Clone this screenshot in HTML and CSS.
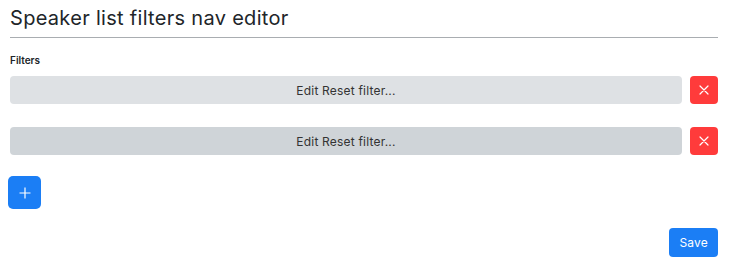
FILE: index.html
```html
<!DOCTYPE html>
<html lang="en">
<head>
    <meta charset="UTF-8">
    <meta name="viewport" content="width=device-width, initial-scale=1">
    <title>Speaker list filters nav editor</title>
    <link rel="stylesheet" href="styles.css">
</head>
<body>
    <main class="editor">
        <h1 class="editor-title">Speaker list filters nav editor</h1>

        <label class="field-label">Filters</label>
        <div class="filter-list">
            <div class="filter-row">
                <button class="filter-edit">Edit Reset filter...</button>
                <button class="btn-remove" title="Remove">
                    <svg width="10" height="10" viewBox="0 0 10 10"><path d="M1 1L9 9M9 1L1 9" stroke="#fff" stroke-width="1.2" stroke-linecap="round"/></svg>
                </button>
            </div>
            <div class="filter-row">
                <button class="filter-edit filter-edit-dark">Edit Reset filter...</button>
                <button class="btn-remove" title="Remove">
                    <svg width="10" height="10" viewBox="0 0 10 10"><path d="M1 1L9 9M9 1L1 9" stroke="#fff" stroke-width="1.2" stroke-linecap="round"/></svg>
                </button>
            </div>
        </div>

        <button class="btn-add" title="Add filter">
            <svg width="12" height="12" viewBox="0 0 12 12"><path d="M6 0.5V11.5M0.5 6H11.5" stroke="#fff" stroke-width="1.2"/></svg>
        </button>

        <div class="actions">
            <button class="btn-save">Save</button>
        </div>
    </main>
</body>
</html>
```

FILE: styles.css
```css
body {
    font-family: Inter, "Noto Sans", sans-serif;
    margin: 0;
    padding: 0;
    background: #fff;
    color: #212529;
}

.editor {
    padding: 0 12px 0 10px;
}

.editor-title {
    font-size: 20px;
    font-weight: 400;
    letter-spacing: 0.3px;
    margin: 0;
    padding: 7px 0 8px;
    line-height: 22px;
    border-bottom: 1px solid #a9adb1;
}

.field-label {
    display: block;
    font-size: 10px;
    font-weight: 600;
    margin: 15px 0 0;
    line-height: 14px;
}

.filter-list {
    margin-top: 9px;
}

.filter-row {
    display: flex;
    gap: 8px;
    margin-bottom: 23px;
}

.filter-edit {
    flex: 1;
    height: 28px;
    border: none;
    border-radius: 4px;
    background: #dee1e4;
    font-family: inherit;
    font-size: 12px;
    letter-spacing: 0.2px;
    color: #333;
    cursor: pointer;
}

.filter-edit-dark {
    background: #cfd4d8;
}

.btn-remove {
    width: 28px;
    height: 28px;
    border: none;
    border-radius: 4px;
    background: #ff3b3b;
    display: flex;
    align-items: center;
    justify-content: center;
    padding: 0;
}

.btn-add {
    width: 33px;
    height: 33px;
    margin-left: -2px;
    margin-top: -2px;
    border: none;
    border-radius: 5px;
    background: #1b7ef5;
    display: flex;
    align-items: center;
    justify-content: center;
    padding: 0;
}

.actions {
    display: flex;
    justify-content: flex-end;
    margin-top: 19px;
}

.btn-save {
    height: 29px;
    padding: 0 10px;
    border: none;
    border-radius: 4px;
    background: #1b7ef5;
    color: #fff;
    font-family: inherit;
    font-size: 12px;
    letter-spacing: 0.2px;
}
```
